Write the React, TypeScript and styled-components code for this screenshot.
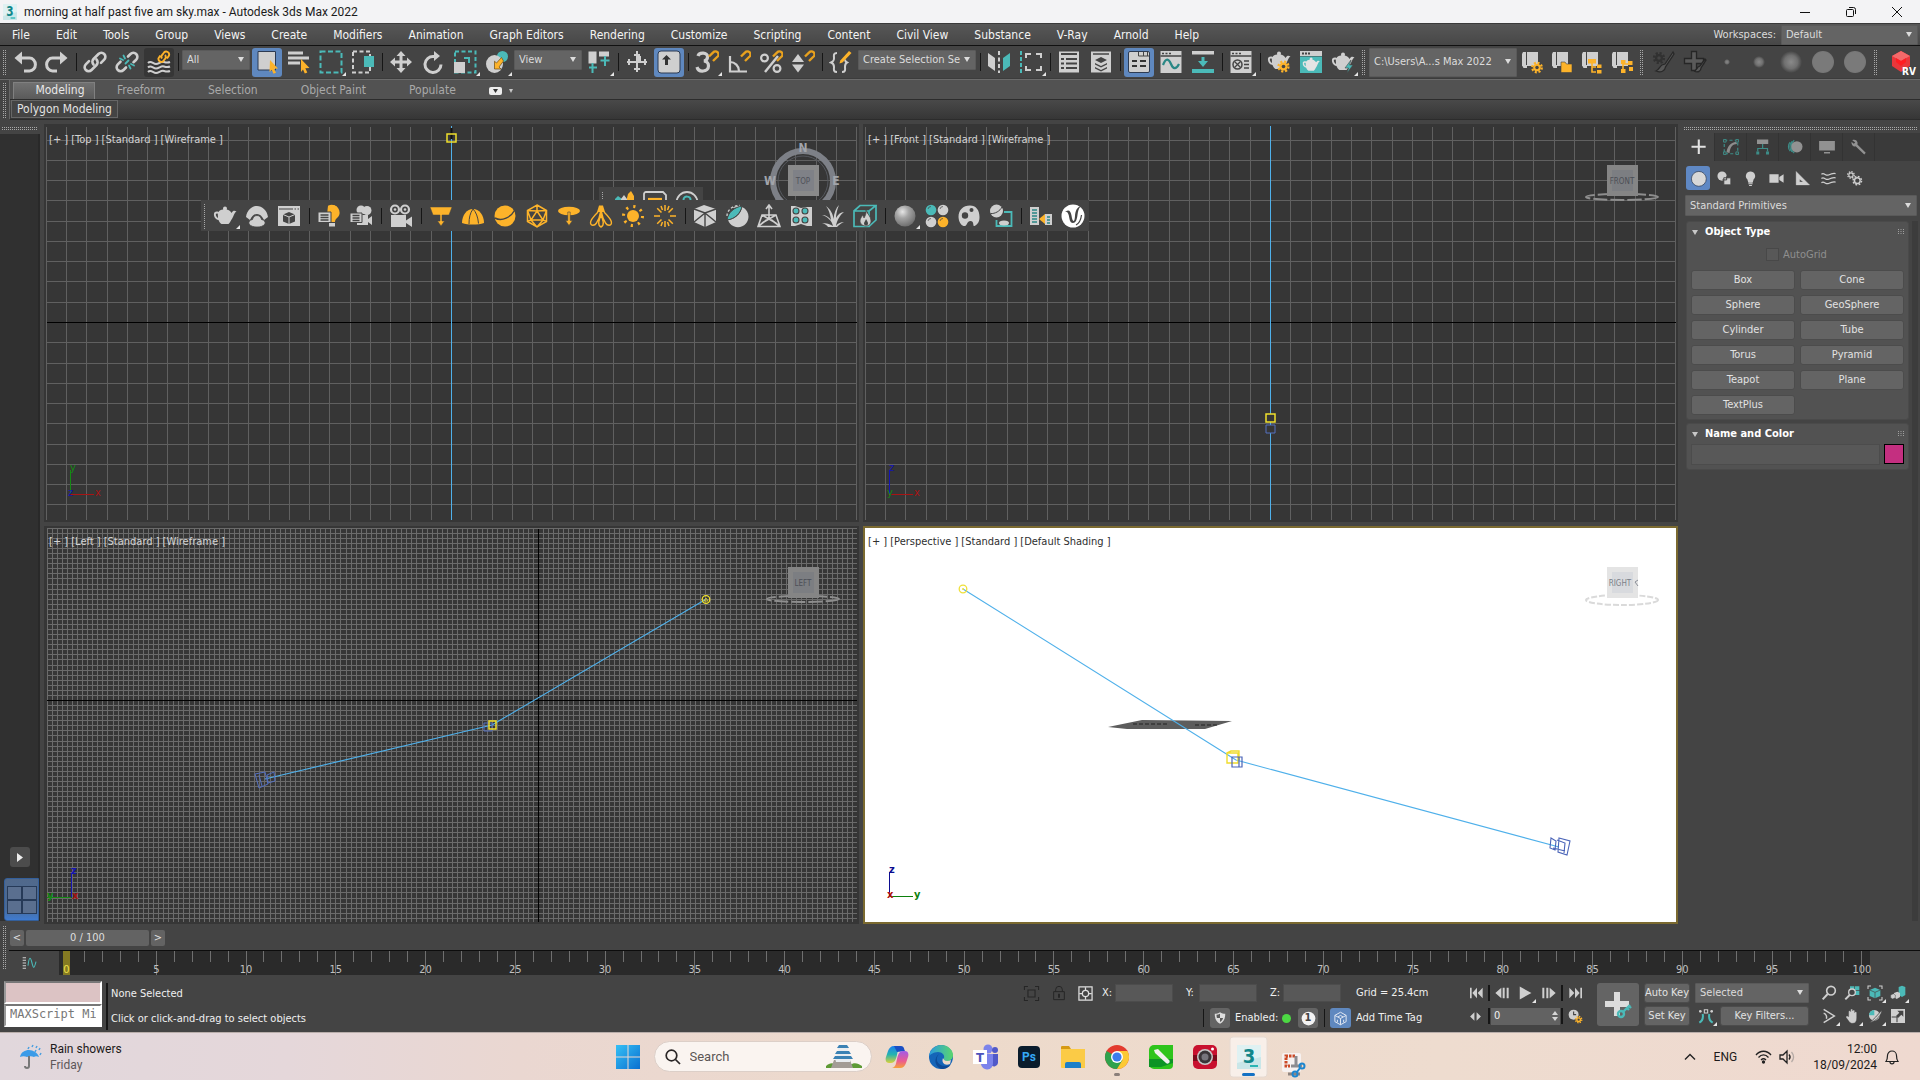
import React from 'react';
import styled, { createGlobalStyle, css } from 'styled-components';

const G = '#cfcfcf';
const T = '#4bbab8';
const Y = '#fdb32a';
const D = '#444444';

const uiFont = '"DejaVu Sans Condensed", "Noto Sans", sans-serif';
const osFont = 'Roboto, "Open Sans", sans-serif';

const GlobalStyle = createGlobalStyle`
  *, *::before, *::after { box-sizing: border-box; }
  body { margin: 0; background: #444; }
  button, input, select { font: inherit; color: inherit; margin: 0; }
  button { border: 0; padding: 0; background: none; }
  svg { display: block; }
`;

/* ---------- icons (24 x 24 canvas) ---------- */

const gear = (cx: number, cy: number, r: number, c: string, hole = D) => (
  <g>
    <circle cx={cx} cy={cy} r={r + 1} fill="none" stroke={c} strokeWidth="2.2" strokeDasharray={`${(r + 1) * 0.42} ${(r + 1) * 0.365}`} />
    <circle cx={cx} cy={cy} r={r} fill={c} />
    <circle cx={cx} cy={cy} r={r * 0.45} fill={hole} />
  </g>
);
const magnet = (
  <path d="M13 7.5l4.2-4.2a3 3 0 0 1 4.4 4.2L17 12" transform="translate(1 -1)" fill="none" stroke="#e8a11e" strokeWidth="2.4" />
);
const scroll = (
  <path d="M3 2h3v13H3.5A2 2 0 0 0 2 16.500V4zM7 2h11v14H7z M2 15h5v3H3.500z" fill={G} />
);
const teapot = (c: string) => (
  <path d="M10 4.500a2 2 0 0 1 4 0l-.3 1c2.300.4 4 1.600 4.800 3.500 1.500-2.500 3-2.600 5-1.500-2.500 1-3 6-5.300 8.500-.6 1.500-1.700 3-2.700 4h-7c-1.500-1-2.500-2.500-3-4C2.500 15.500.5 12.500 1 9.500c.3-1.700 2.500-2.500 4.500-1.500.8-1.400 2.300-2.300 4.700-2.500zM4.800 9.800c-1.600-.6-2.300.3-1.800 1.800.4 1.200 1 2 2 2.400z" fill={c} fillRule="evenodd" />
);

const icons: Record<string, React.ReactNode> = {
  undo: <g><path d="M1.500 8L9 1.500v13z" fill={G} /><path d="M7 8h9.500a5 5.500 0 0 1 0 13H11" fill="none" stroke={G} strokeWidth="3" /></g>,
  redo: <g><path d="M22.500 8L15 1.500v13z" fill={G} /><path d="M17 8H7.500a5 5.500 0 0 0 0 13H12" fill="none" stroke={G} strokeWidth="3" /></g>,
  link: (
    <g fill="none" stroke={G} strokeWidth="2.6" strokeLinecap="round">
      <path d="M10.500 14.500a4 4 0 0 1 0-5.500l5-5a4 4 0 0 1 5.700 5.700l-3.200 3.200" />
      <path d="M13.500 9.500a4 4 0 0 1 0 5.500l-5 5a4 4 0 0 1-5.700-5.700l3.200-3.200" />
    </g>
  ),
  unlink: (
    <g fill="none" strokeWidth="2.6" strokeLinecap="round">
      <path d="M13 6.500l2.500-2.500a4 4 0 0 1 5.700 5.700L18.500 12.200M11 17.500L8.500 20a4 4 0 0 1-5.700-5.700L5.500 11.700" stroke={G} />
      <path d="M8.500 5.500l1.500 3M5 8.500l3 1.500M15.500 18.500l-1.500-3M19 15.500l-3-1.500M10.500 13.500l3-3" stroke={T} strokeWidth="1.800" />
    </g>
  ),
  bind: (
    <g fill="none">
      <path d="M1 13c3-3 5 1 8 1s5-3 8-2 4 1 6 0M1 17.500c3-3 5 1 8 1s5-3 8-2 4 1 6 0M1 22c3-3 5 1 8 1s5-3 8-2 4 1 6 0" stroke={G} strokeWidth="2" />
      <path d="M15 8.500a3 3 0 0 1 .5-4l1.500-2a3 3 0 0 1 5 3l-2 3M18 5a3 3 0 0 1-.5 4.500l-1.500 2a3 3 0 0 1-4.500-3.200l1.800-2.800" stroke={Y} strokeWidth="1.900" />
    </g>
  ),
  select: (
    <g>
      <path d="M3 1.500h17.500v18.500H3z" fill={G} stroke="#2d3b52" strokeWidth="1" />
      <path d="M15 10l8 8.500-4 .3 2 4-2.500 1-1.800-4L14.500 22z" fill={Y} />
    </g>
  ),
  selectName: (
    <g>
      <path d="M1 1.500h15v3H1zM1 6.500h21v3H1zM1 11.500h12v3H1z" fill={G} />
      <path d="M14 9l8.500 9-4.200.3 2 4.200-2.500 1-1.800-4L14 22z" fill={Y} />
    </g>
  ),
  rectRegion: <rect x="1.500" y="1.500" width="21" height="21" fill="none" stroke={T} strokeWidth="2" strokeDasharray="5 2.500" />,
  windowCross: (
    <g>
      <rect x="2" y="1.500" width="17" height="21" fill="none" stroke={G} strokeWidth="2" strokeDasharray="4 2.500" />
      <rect x="13" y="6" width="10" height="11" fill={T} />
    </g>
  ),
  move: <path d="M12 1l4.500 5h-3v4.500H18v-3l5 4.500-5 4.500v-3h-4.500V18h3L12 23l-4.500-5h3v-4.500H6v3L1 12l5-4.500v3h4.500V6h-3z" fill={G} />,
  rotate: <path d="M13 1l6 5-6 5V8a6.500 6.500 0 1 0 5.500 6.500h3A9.500 9.500 0 1 1 13 5z" fill={G} />,
  scale: (
    <g>
      <rect x="2" y="1.500" width="20.500" height="21" fill="none" stroke={T} strokeWidth="2" strokeDasharray="4 2.500" />
      <path d="M1 12h11v11H1z" fill={G} />
      <path d="M11 7h6v6h-2V9h-4z" fill={T} />
    </g>
  ),
  place: (
    <g>
      <circle cx="17.500" cy="6.500" r="5.500" fill={T} />
      <ellipse cx="9.500" cy="14" rx="8.500" ry="9" fill={G} />
      <path d="M16.500 7.500l-5 5.500-2-1.800V19h6.500l-2-2 4.500-6z" fill={Y} stroke="#6b4a10" strokeWidth=".7" />
    </g>
  ),
  pivot: (
    <g>
      <path d="M1.500 1.500h8v12h-8zM12 1.500h10v5h-10z" fill={G} />
      <path d="M4.500 13h2v3.500H10v2H6.500V23h-2v-4.500H2v-2h2.500zM17 6h2v3.500h3.500v2H19V16h-2v-4.500h-3.500v-2H17z" fill={T} />
    </g>
  ),
  manipulate: <path d="M11 1h2v5h3v5h6v2h-6v0h-3v9h-2v-9H2v-2h9zM9 4h6v2H9zM9 18h6v2H9zM3 9h2v6H3zM19 9h2v6h-2z" fill={G} />,
  keyboard: (
    <g>
      <rect x="1" y="1" width="22" height="22" rx="3" fill={G} stroke="#2d3b52" strokeWidth="1" />
      <path d="M9.500 5l4.500 4.500h-3V15H8V9.500H5z" fill="#333" />
    </g>
  ),
  snap3: (
    <g>
      <path d="M3 6c1-4 10-4 9.500 1 0 2-1 3.500-3.500 4 3 .5 4.500 2 4.500 5 0 6-10 7-11.500 1" fill="none" stroke={G} strokeWidth="3.200" />
      {magnet}
    </g>
  ),
  snapAngle: (
    <g>
      <path d="M3 6v15.500h17M3 12c5 0 9 4 9 9" fill="none" stroke={G} strokeWidth="2.200" />
      {magnet}
    </g>
  ),
  snapPercent: (
    <g>
      <path d="M19 6L6 22" stroke={G} strokeWidth="2.400" />
      <circle cx="5.500" cy="8" r="3.400" fill="none" stroke={G} strokeWidth="2.200" />
      <circle cx="18" cy="18.500" r="3.400" fill="none" stroke={G} strokeWidth="2.200" />
      {magnet}
    </g>
  ),
  snapSpinner: (
    <g>
      <path d="M1 12l6-8 6 8zM1 14.500h12l-6 8z" fill={G} />
      {magnet}
    </g>
  ),
  namedSel: (
    <g>
      <path d="M8 3c-4 0-3 3-3 5s0 3-3 4.500c3 1 3 2.500 3 4.500s-1 5 3 5M13 22c4 0 3-3 3-5s0-3.500 2-4.500c-1.500-.8-2-2-2-3" fill="none" stroke={G} strokeWidth="2" />
      <path d="M20 1l2.500 2-9 9.500-3 1 .8-3z" fill={Y} />
    </g>
  ),
  mirror: (
    <g>
      <path d="M1 3l7 5v13l-7-5z" fill={G} />
      <path d="M12 1v22" stroke={G} strokeWidth="2" strokeDasharray="4 2.500" />
      <path d="M23 3l-7 5v13l7-5z" fill={T} />
    </g>
  ),
  align: (
    <g fill="none" strokeWidth="2">
      <path d="M2 1v22" stroke={T} strokeDasharray="4 2" />
      <path d="M7 8V4h5M17 4h5v4M22 16v4h-5M12 20H7v-4" stroke={G} />
    </g>
  ),
  layers: (
    <g>
      <path d="M2 1.500h20v21H2z" fill={G} />
      <path d="M4 4h16M4 9h3M9 9h11M4 13.500h3M9 13.500h11M4 18h3M9 18h11" stroke={D} strokeWidth="2" />
    </g>
  ),
  stack: (
    <g>
      <path d="M2 1.500h20v21H2z" fill={G} />
      <path d="M4 4h16" stroke={D} strokeWidth="1.500" />
      <path d="M12 7l6 3-6 3-6-3zM6 13l6 3 6-3v1.500l-6 3-6-3zM6 17l6 3 6-3v1.500L12 21.500l-6-3z" fill={D} />
    </g>
  ),
  ribbon: (
    <g>
      <rect x="1.500" y="1.500" width="21" height="21" rx="1.500" fill={G} stroke="#2d3b52" />
      <path d="M11.500 2v4h10.500M16.500 2v4M20.500 2v4" stroke={D} fill="none" />
      <path d="M5 11h5M13 11h6M5 16h5M13 16h6" stroke="#333" strokeWidth="2.200" />
    </g>
  ),
  curve: (
    <g>
      <path d="M1.500 1h21v22h-21z" fill={G} />
      <path d="M3 3.500h2M6.500 3.500h2M10 3.500h2M1.500 6h21" stroke={D} strokeWidth="1.600" />
      <path d="M4 15c3-8 6-6 8-1s5 6 8 0" fill="none" stroke="#2a8785" strokeWidth="2.200" />
    </g>
  ),
  schematic: (
    <g>
      <path d="M1 1h22v3.500H1z" fill={G} />
      <path d="M10.500 7h3v4H17l-5 6-5-6h3.500zM1 19h22v4H1z" fill={T} />
    </g>
  ),
  material: (
    <g>
      <path d="M1.500 1h21v22h-21z" fill={G} />
      <path d="M3 3.500h2M6.500 3.500h2M10 3.500h2M1.500 6h21M15 11h5M15 14.500h5M15 18h5" stroke={D} strokeWidth="1.500" />
      <circle cx="8.500" cy="14.500" r="4.500" fill="none" stroke={D} strokeWidth="1.500" />
      <path d="M5.500 11.500l6 6M11.500 11.500l-6 6" stroke={D} strokeWidth="1.300" />
    </g>
  ),
  renderSetup: <g><g transform="translate(0 -1)">{teapot(G)}</g>{gear(16.500, 16.500, 4, Y)}</g>,
  renderFrame: (
    <g>
      <path d="M1 1h22v5H1z" fill={G} />
      <path d="M3 3.500h2M6 3.500h2M9 3.500h2" stroke={D} strokeWidth="2" />
      <path d="M1 6.500h22V23H1z" fill={T} />
      <g transform="translate(3 5.500) scale(.76)">{teapot('#e4e4e4')}</g>
    </g>
  ),
  render: <g>{teapot(G)}<path d="M20 10l-6 8h3.500l-1.500 5 6-8h-3.500z" fill={T} stroke={D} strokeWidth=".6" /></g>,
  projGear: <g>{scroll}{gear(17, 17.500, 3.800, Y)}</g>,
  projFolder: <g>{scroll}<path d="M11 12h4l1.500 2H22v8.500H11z" fill={Y} stroke={D} strokeWidth=".6" /></g>,
  projTree: <g>{scroll}<path d="M8 9h8v4.500H8z" fill={Y} /><path d="M12 13v9h4M12 17h4" stroke={Y} strokeWidth="1.600" fill="none" /><path d="M17 14.500h4.500v3.500H17zM17 20h4.500v3.500H17z" fill={Y} /></g>,
  projNodes: <g>{scroll}<path d="M13 12v9M13 14h7" stroke={Y} strokeWidth="1.600" /><path d="M11 10h4.500v4H11zM18 11h4.500v4H18zM11 19h4.500v4H11z" fill={Y} /><path d="M19 17h4v4h-4z" fill={Y} /></g>,
  brushGear: (
    <g opacity=".9">
      {gear(8, 8, 4, '#2f2f2f')}
      <path d="M22 2l-8 12-3 1c-2 1-3 5-6 6 5 2 9 0 9.500-4L23 4z" fill="#5a5a5a" stroke="#262626" strokeWidth="1.300" />
    </g>
  ),
  brushPlus: (
    <g>
      <path d="M8.500 1.500h5v7h7v5h-7v7h-5v-7h-7v-5h7z" fill="#5a5a5a" stroke="#262626" strokeWidth="1.300" />
      <path d="M22 9l-5 7-2 1c-1 1-2 4-4 4 4 2 7 0 7-3l5-8z" fill="#5a5a5a" stroke="#262626" strokeWidth="1.300" />
    </g>
  ),
  rv: (
    <g>
      <path d="M12 1l9 5v10l-9 6-9-6V6z" fill="#e8373b" />
      <path d="M12 1l9 5-9 5-9-5z" fill="#f4696a" />
      <path d="M7 8l5 3 5-3v4l-5 4-5-4z" fill="#ff1c22" />
    </g>
  ),
  /* floating V-Ray toolbar */
  teapot: teapot(G),
  cloud: (
    <g fill={G}>
      <path d="M1 13C2 6 7 2 12 2s10 4 11 11l-4 3c-2-4-4-6-7-6s-5 2-7 6z" />
      <path d="M12 11.500c3 0 4 2 4.500 4 3 .5 4 2 3.500 4.500-2 2.500-5 3-8 3s-6-.5-8-3c-.5-2.500.5-4 3.500-4.500.5-2 1.500-4 4.500-4z" stroke={D} strokeWidth=".8" />
    </g>
  ),
  vfb: (
    <g>
      <path d="M1 2h22v20H1z" fill={G} />
      <path d="M2 5h14M17.500 5h1.500M20.500 5H22" stroke={D} strokeWidth="1.200" />
      <path d="M12 8l6 2.500v7L12 20l-6-2.500v-7z" fill={D} />
      <path d="M6 10.500l6 2.500 6-2.500M12 13v7" stroke={G} fill="none" />
    </g>
  ),
  lightLister: (
    <g>
      <path d="M15.500 1a7.500 7.500 0 0 1 4 13.500c-1 .8-1.500 2-1.500 3.500h-5V5z" fill={Y} />
      <path d="M11 1.800a8 8 0 0 1 9 1.200v8H10z" fill={Y} />
      <path d="M12 19h6v3.500h-6z" fill={G} />
      <path d="M1 8h13v10.500H1z" fill={G} stroke={D} /><path d="M3.500 11h8M3.500 13.500h8M3.500 16h8" stroke={D} strokeWidth="1.300" />
    </g>
  ),
  camLister: (
    <g fill={G}>
      <circle cx="12" cy="6" r="4.500" /><circle cx="18" cy="6.500" r="4.500" />
      <path d="M8 11h11v10H8zM19 15l4-3v9l-4-3z" />
      <path d="M1 9h12v9.500H1z" stroke={D} /><path d="M3.500 11.500h7M3.500 14h7M3.500 16.500h7" stroke={D} strokeWidth="1.300" />
    </g>
  ),
  camera: (
    <g>
      <g fill="none" stroke={G} strokeWidth="2.200"><circle cx="6" cy="5.500" r="4" /><circle cx="16" cy="5.500" r="4" /></g>
      <circle cx="6" cy="5.500" r="1.300" fill={G} /><circle cx="16" cy="5.500" r="1.300" fill={G} />
      <path d="M2 11h15v12H2zM17 16.500l6-4V23l-6-4z" fill={G} />
    </g>
  ),
  planeLight: <path d="M1 3h22l-3 8h-7v6h2.500L12 22l-3.500-5H11v-6H4z" fill={Y} stroke={D} strokeWidth=".5" />,
  dome: <g><path d="M1 19C1 11 6 5 12 5s11 6 11 14c-6 2-16 2-22 0z" fill={Y} /><path d="M12 5c-3 4-4 9-4 15M12 5c3 3 5 8 5.500 14.500" stroke={D} strokeWidth="1" fill="none" /></g>,
  sphereLight: <g><circle cx="12" cy="12" r="10.500" fill={Y} /><path d="M2 14C9 18 18 13 21.500 6.500" stroke={D} strokeWidth="1.500" fill="none" /></g>,
  meshLight: <path d="M12 1l9.500 5.500v11L12 23l-9.500-5.500v-11zM12 7l6 9H6zM12 1v6M2.500 6.500L12 7l9.500-.5M2.500 6.500L6 16l-3.500 1.500M21.500 6.500L18 16l3.500 1.500M6 16l6 7 6-7" fill="none" stroke={Y} strokeWidth="1.500" />,
  discLight: <g><ellipse cx="12" cy="7" rx="11" ry="4.200" fill={Y} /><path d="M10.800 8h2.400v8.500h2.300L12 21.500l-3.500-5h2.300z" fill={Y} stroke={D} strokeWidth=".6" /></g>,
  ies: <g><path d="M8 8l2-6.500h4L16 8z" fill={Y} /><path d="M9 8c-3 3-8 8-7.500 11s4 3 6 0S11 11 11.500 8M15 8c3 3 8 8 7.500 11s-4 3-6 0S13 11 12.500 8M12 11c-2 5-4 10 0 12 4-2 2-7 0-12z" fill="none" stroke={Y} strokeWidth="1.400" /></g>,
  sun: <g><circle cx="12" cy="12" r="6" fill={Y} /><circle cx="12" cy="12" r="9.500" fill="none" stroke={Y} strokeWidth="3" strokeDasharray="2.200 5.260" /></g>,
  ambient: <path d="M12 1v6M12 17v6M1 12h6M17 12h6M4.200 4.200l4.300 4.300M15.500 15.500l4.300 4.300M4.200 19.800l4.300-4.300M15.500 8.500l4.300-4.300M8 2l1.500 4M16 2l-1.500 4M8 22l1.500-4M16 22l-1.500-4" stroke={Y} strokeWidth="1.500" />,
  proxy: <g><path d="M1 5l10-4 12 4v13l-11 5L1 18z" fill={G} /><path d="M1 5l11 4 11-4M12 9v14M12 9L1 18M12 9l11 9" stroke={D} strokeWidth="1.400" fill="none" /></g>,
  clipper: <g><path d="M7 4a10.500 10.500 0 1 1-4 12C8 16 16 11 17 3" fill={G} /><path d="M17 2C10 3 3 8 2 16c8-1 14-7 15-14z" fill={T} stroke={D} /><path d="M2 12C2 6 8 1 15 1.500" stroke={G} strokeWidth="1.300" strokeDasharray="2.500 2" fill="none" /></g>,
  planeObj: <g fill="none" stroke={G} strokeWidth="1.600"><path d="M12 14V3M9 5l3-4 3 4M5 11h14l4 11.500H1zM5 11l14 8M19 11L5 19M1.500 22l8-6M22.500 22l-8-6" /></g>,
  instancer: <g><path d="M2 2h4l6 2 6-1h5v19h-5l-6-2-6 2H2z" fill={G} /><g fill={T} stroke={D} strokeWidth="1.100"><circle cx="7" cy="7" r="3" /><circle cx="16" cy="7" r="3" /><circle cx="7" cy="16" r="3" /><circle cx="16" cy="16" r="3" /></g></g>,
  fur: <path d="M12 22c-1-5-5-9-11-11 4 0 7 2 9 5C9 10 8 6 5 2c5 4 7 8 7.500 13C13 9 15 4 18 1c-2 5-3 9-3 13 2-4 5-6 8-6-4 3-7 8-8 14 2-3 5-4 8-4-3 1-5 3-7 5H7c-1-2-3-3-6-4 4 0 8 1 11 3z" fill={G} />,
  fire: <g><path d="M1 7h15v15.500H1zM1 7l6-5.500h16L16 7M23 1.500V16l-7 6.500" fill="none" stroke={T} strokeWidth="1.700" /><path d="M13 6c1 4 5 6 5 11 0 3-2 5-5 5s-6-2-6-5c0-3 2-4 2.500-6 1 1 1 2 1.500 3 1-2 2.500-4 2-8z" fill={G} stroke={D} strokeWidth=".7" /><path d="M13 15c1 2 2 3 2 4.500a2 2 0 0 1-4 0c0-1.500 1.500-2.500 2-4.500z" fill={D} /></g>,
  ball: <g><defs><radialGradient id="ball" cx=".38" cy=".3" r=".75"><stop offset="0" stopColor="#e6e6e6" /><stop offset=".4" stopColor="#a5a5a5" /><stop offset="1" stopColor="#6a6a6a" /></radialGradient></defs><circle cx="12" cy="12" r="10.500" fill="url(#ball)" /></g>,
  balls: <g><circle cx="6" cy="6" r="5.300" fill={T} /><circle cx="18" cy="6" r="5.300" fill={G} /><circle cx="6" cy="18" r="5.300" fill={G} /><circle cx="18" cy="18" r="5.300" fill={Y} /><g fill="none" stroke={D} strokeWidth=".7"><path d="M3 5a3 3 0 0 1 3-2.500M15 5a3 3 0 0 1 3-2.500M3 17a3 3 0 0 1 3-2.500M15 17a3 3 0 0 1 3-2.500" /></g></g>,
  palette: <g><path d="M13 1.500C6 1.500 1.500 6 1.500 13c.3 5 2.500 8 5 9 4 1 3-5 7-5s2 6 4 5c4-2 5-5 5-9C22.500 6 19 1.500 13 1.500z" fill={G} /><circle cx="14.500" cy="6" r="2" fill={D} /><circle cx="8" cy="11.500" r="3.200" fill={D} /></g>,
  converter: <g><circle cx="7.500" cy="7" r="6.500" fill={G} /><path d="M1.500 9.500C6 10 11 7 13 3" stroke={D} fill="none" /><path d="M15 8h7.500v14H7.500v-6" fill="none" stroke={T} strokeWidth="1.800" /><ellipse cx="15" cy="19" rx="5" ry="2.500" fill={G} /></g>,
  sceneConv: <g><path d="M1 3h9v18H1zM16 10h7v11h-7z" fill={G} /><path d="M3 6h5M3 9h5M3 12h5M3 15h5M3 18h5M18 13h3M18 16h3M18 19h3" stroke="#2a8785" strokeWidth="1.400" /><path d="M16 10v10l-6-5z" fill={Y} /></g>,
  vray: <g><circle cx="12" cy="12" r="11.500" fill="#fff" /><path d="M4 7.500l3-1c2 0 3 2 3.500 5s1.200 5.500 2 5.500 1.300-2 1.500-5c.3-5 2-9 5.500-9.500-2 2-2.500 5-3 8.500-.6 5-2 8-4.500 8-3.500 0-3.500-5-4.300-8C7 8.500 6 7.500 4 7.500z" fill={D} /><path d="M15 21c4-2 5-6 5.500-10" stroke={D} strokeWidth="1.200" fill="none" /></g>,
  trees: <g><path d="M4 8l3-3 4 3v12H4z" fill={T} /><path d="M10 8l3-4 3 4v12h-6z" fill={G} /><path d="M17 3l3-3 3 5v15h-7V7z" fill={Y} /></g>,
  frame: <g fill="none"><path d="M1 22V3a2 2 0 0 1 2-2h17l3 3v16" stroke={G} strokeWidth="1.800" /><path d="M5 8h14" stroke={Y} strokeWidth="2.200" /></g>,
  help: <g fill="none"><circle cx="12" cy="11.500" r="10.500" stroke={G} strokeWidth="1.800" /><path d="M8.500 9c0-5 7.500-4 7 0 0 2-3 2.500-3.500 5" stroke={T} strokeWidth="2" /></g>,
  /* command panel */
  create: <path d="M10.500 3h2.500v7.500H20V13h-7v7.500h-2.500V13H3v-2.500h7.500z" fill="#e2e2e2" />,
  modify: <g fill="none"><path d="M3 3h18v18H3z" stroke="#3d8c87" strokeWidth="1.600" strokeDasharray="4 3" /><path d="M6 19C7 12 11 6 19 5l1 3c-6 0-9 4-10 12z" fill="#8d8d8d" /><g fill={D} stroke="#3d8c87" strokeWidth="1.200"><path d="M2 2h3.500v3.500H2zM18.500 2H22v3.500h-3.500zM2 18.500h3.500V22H2zM18.500 18.500H22V22h-3.500z" /></g></g>,
  hierarchy: <g><path d="M4 2h15v6H4z" fill="#929292" /><path d="M11.500 8v6M5 18v-4h13v4" stroke="#3d8c87" strokeWidth="1.600" fill="none" /><path d="M3 18h4v4H3zM16 18h4v4h-4z" fill="#3d8c87" /></g>,
  motion: <g><g fill="none" stroke="#3d8c87" strokeWidth="1.500"><path d="M8 4.500a10 10 0 0 0 0 14M11 3a11 11 0 0 0 0 17" /><path d="M5.500 5.500a9 9 0 0 0 0 12" /></g><circle cx="14.500" cy="11.700" r="7.500" fill="#929292" /></g>,
  display: <g fill="#929292"><path d="M1.500 4h21v12.500h-21zM8 18.500h8v2H8z" /></g>,
  utilities: <path d="M3 3c2-1 6-1 7 3 .3 1 0 2-.2 2.500L21 19.500 19 22 7.500 11C5 12 1.500 10 2 5l3 2.500L7 6z" fill="#929292" />,
  geometry: <circle cx="12.500" cy="12.500" r="10.500" fill="#d8d8d8" stroke="#2d3b52" strokeWidth="1" />,
  shapes: <g><circle cx="8.500" cy="8.500" r="6.500" fill={G} /><path d="M11 11h10v10H11z" fill={G} stroke={D} strokeWidth="1.400" /><path d="M9 14h6V9" fill="none" stroke={D} strokeWidth="1.400" /></g>,
  lights: <g><path d="M12 2a6.500 6.500 0 0 1 4.500 11.200L15 18H9l-1.500-4.800A6.500 6.500 0 0 1 12 2z" fill={G} /><path d="M9 19.500h6M10 21.800h4" stroke={G} strokeWidth="1.500" /></g>,
  cameras: <path d="M2 6h13v12H2zM16 10l6-4v12l-6-4z" fill={G} />,
  helpers: <path d="M3 2l19 19H3zM8 13v4h5z" fill={G} fillRule="evenodd" stroke={G} strokeWidth=".5" />,
  warps: <path d="M2 6c4-3 6 3 10 1s6-3 10-2M2 12c4-3 6 3 10 1s6-3 10-2M2 18c4-3 6 3 10 1s6-3 10-2" fill="none" stroke={G} strokeWidth="1.700" />,
  systems: <g fill="none" stroke={G}><circle cx="7" cy="7" r="3" strokeWidth="1.600" /><circle cx="7" cy="7" r="4.600" strokeWidth="1.800" strokeDasharray="2 1.600" /><circle cx="16" cy="15" r="4" strokeWidth="2" /><circle cx="16" cy="15" r="6" strokeWidth="2" strokeDasharray="2.600 2.100" /></g>,
  /* status bar */
  isolate: <g fill="none" stroke="#262626" strokeWidth="1.500"><path d="M2 7V2h5M17 2h5v5M22 17v5h-5M7 22H2v-5M7 7h10v10H7z" /></g>,
  lock: <g fill="none" stroke="#262626" strokeWidth="1.500"><path d="M4 10h16v12H4zM7 10V7a5 5 0 0 1 10 0v3" /><path d="M12 13v6" strokeWidth="3" /></g>,
  absolute: <g fill="none" stroke="#dedede" strokeWidth="2"><path d="M1.500 1.500h21v21h-21z" /><circle cx="12" cy="12" r="5" /><path d="M12 2v5M12 17v5M2 12h5M17 12h5" /></g>,
  shield: <g><path d="M12 2c3 2 6 2.500 9 2.500C21 14 18 19 12 22 6 19 3 14 3 4.500 6 4.500 9 4 12 2z" fill="#dedede" /><path d="M12 12V4.500c-2 1.300-4 2-6 2 0 2 .2 4 .8 5.500zM12 12v7c3-2 4.500-4 5.200-7z" fill="#5c5c5c" /></g>,
  one: <circle cx="12" cy="12" r="11" fill="#f2f2f2" />,
  timeTag: <g fill="none" stroke="#dfe6f2" strokeWidth="1.600"><path d="M12 2l9 5v10l-9 5-9-5V7zM3 7l9 5 9-5M12 12v10M12 7l4 2.500M8 9.500L12 7M7 14v4M17 14v4" /></g>,
  toStart: <path d="M3 4h2.500v16H3zM13.500 4v16L6.500 12zM22 4v16l-7.500-8z" fill={G} />,
  prev: <path d="M11 4v16L2 12zM13 4h3v16h-3zM19 4h3v16h-3z" fill={G} />,
  play: <path d="M3 1l20 11L3 23z" fill={G} />,
  next: <path d="M13 4v16l9-8zM8 4h3v16H8zM2 4h3v16H2z" fill={G} />,
  toEnd: <path d="M18.500 4H21v16h-2.500zM10.500 4v16l7-8zM2 4v16l7.500-8z" fill={G} />,
  keyMode: <path d="M10 4v16L2 12zM14 4v16l8-8z" fill={G} />,
  timeCfg: <g><circle cx="9" cy="9" r="8" fill={G} /><path d="M9 4v5h4" stroke={D} strokeWidth="1.800" fill="none" />{gear(17, 17, 4, Y)}</g>,
  tangents: <g><path d="M2 22c5-3 6-8 5-13M22 22c-5-3-6-8-5-13" stroke={T} strokeWidth="3" fill="none" /><path d="M9.500 2.500h5v5h-5z" fill="none" stroke={G} strokeWidth="1.600" /><circle cx="3.500" cy="5" r="2" fill={G} /><circle cx="20.500" cy="5" r="2" fill={G} /></g>,
  zoom: <g fill="none" stroke={G}><circle cx="15" cy="8.500" r="6.500" strokeWidth="2.400" /><path d="M10 13.500L2.500 21.500" strokeWidth="3" /></g>,
  zoomAll: <g><path d="M9 2h6v6H9zM16 2h7v6h-7zM16 9h7v6h-7z" fill={T} /><circle cx="12" cy="11" r="5" fill={D} stroke={G} strokeWidth="2" /><path d="M8.500 15L2 21.500" stroke={G} strokeWidth="3" /></g>,
  extents: <g><path d="M12 4l8 3.500v9L12 20l-8-3.500v-9z" fill={T} /><path d="M4 7.500l8 3.500 8-3.500M12 11v9" stroke={D} fill="none" /><path d="M1.500 6V1.500H6M18 1.500h4.500V6M22.500 18v4.500H18M6 22.500H1.500V18" fill="none" stroke={G} strokeWidth="1.600" /></g>,
  extentsAll: <g><path d="M13 3l5-2 5 2v12l-5 3-5-3z" fill={T} /><path d="M6 12l5-2 4 2v6l-5 3-4-3z" fill={G} /><path d="M1 15l4-2 3 2v4l-4 2-3-2z" fill={G} stroke={D} strokeWidth=".7" /></g>,
  fov: <g fill="none" stroke={G} strokeWidth="2.200"><path d="M4 2l16 10L4 22M4 8c4 1 5 5 4 8" /></g>,
  pan: <path d="M7 13V5.500a1.500 1.500 0 0 1 3 0V3a1.500 1.500 0 0 1 3 0v1.500a1.500 1.500 0 0 1 3 0V7a1.500 1.500 0 0 1 3 0v8c0 5-2 8-6 8-5 0-6-4-10-9 0-2 2-2.500 4-1z" fill={G} stroke={D} strokeWidth=".5" />,
  orbit: <g><circle cx="11" cy="11" r="8" fill={G} /><path d="M11 3a8 8 0 0 0-8 8h8z" fill={T} /><path d="M22 3c1 6-8 17-18 19 6-5 12-11 18-19z" fill={G} stroke={D} strokeWidth="1.200" /></g>,
  maximize: <g><path d="M1.500 1.500h21v21h-21z" fill={G} /><path d="M11 4h9v9l-3-3-5 5-3-3 5-5z" fill={D} /><path d="M2.500 13.500h8v8" stroke={D} strokeWidth="1.600" fill="none" /></g>,
  trackIcon: <g fill="none"><path d="M1 4h5M1 8h5M1 12h5M1 16h5M1 20h5" stroke={G} strokeWidth="1.600" /><path d="M9 16c2-16 4-12 6-4s3 10 6-2" stroke={T} strokeWidth="1.600" /></g>,
};

const Icon = ({ name, size = 24 }: { name: string; size?: number }) => (
  <svg width={size} height={size} viewBox="0 0 24 24" aria-hidden="true">{icons[name]}</svg>
);

/* ---------- shared parts ---------- */

const Grip = styled.span<{ $h: number; $w?: number }>`
  flex: none;
  width: ${(p) => p.$w ?? 10}px;
  height: ${(p) => p.$h}px;
  padding: 0 3px;
  background:
    repeating-linear-gradient(#444 0 1px, transparent 1px 2px) content-box,
    repeating-linear-gradient(90deg, #a8a8a8 0 1px, #444 1px 2px) content-box;
`;
const HGrip = styled.span`
  display: block;
  height: 4px;
  background:
    repeating-linear-gradient(#444 0 1px, transparent 1px 2px),
    repeating-linear-gradient(90deg, #a8a8a8 0 1px, #444 1px 2px);
`;
const Divider = styled.span<{ $w?: number; $h?: number }>`
  flex: none;
  width: ${(p) => p.$w ?? 6}px;
  height: ${(p) => p.$h ?? 18}px;
  background: linear-gradient(#161616, #161616) center / 1px 100% no-repeat;
`;
const ToolBtn = styled.button<{ $on?: boolean; $dim?: boolean; $fly?: boolean; $w?: number }>`
  flex: none;
  position: relative;
  display: grid;
  place-items: center;
  width: ${(p) => (p.$w ?? 32) - 2}px;
  height: 29px;
  margin: 0 1px;
  border-radius: 3px;
  ${(p) => p.$on && css`background: #5f88bf;`}
  ${(p) => p.$dim && css`background: #363636;`}
  ${(p) => p.$fly && css`
    &::after {
      content: '';
      position: absolute;
      right: 0;
      bottom: 1px;
      border: 2px solid transparent;
      border-right-color: #e6e6e6;
      border-bottom-color: #e6e6e6;
    }
  `}
`;
type ToolDef = { i: string; l: string; on?: boolean; dim?: boolean; fly?: boolean; w?: number };
const Tools = ({ items }: { items: ToolDef[] }) => (
  <>
    {items.map((t) => (
      <ToolBtn key={t.i} aria-label={t.l} $on={t.on} $dim={t.dim} $fly={t.fly} $w={t.w}>
        <Icon name={t.i} />
      </ToolBtn>
    ))}
  </>
);

const SelectBox = styled.span<{ $w?: number; $h: number; $x?: number; $raised?: boolean }>`
  flex: none;
  position: relative;
  display: block;
  width: ${(p) => (p.$w ? `${p.$w}px` : '100%')};
  height: ${(p) => p.$h}px;
  margin: 0 ${(p) => p.$x ?? 0}px;
  ${(p) => p.$raised && css`align-self: flex-start; margin-top: 4px;`}
  &::after {
    content: '';
    position: absolute;
    right: 6px;
    top: calc(50% - 3px);
    border: 3px solid transparent;
    border-top: 5px solid #dcdcdc;
    border-bottom: 0;
    pointer-events: none;
  }
  select {
    appearance: none;
    display: block;
    width: 100%;
    height: 100%;
    padding: 0 14px 0 4px;
    border: 1px solid #5a5a5a;
    border-radius: 1px;
    background: #646464;
    color: #dcdcdc;
    overflow: hidden;
  }
`;
type SelectProps = { label: string; value: string; w?: number; h: number; x?: number; raised?: boolean };
const Select = ({ label, value, w, h, x, raised }: SelectProps) => (
  <SelectBox $w={w} $h={h} $x={x} $raised={raised}>
    <select aria-label={label} defaultValue={value}><option>{value}</option></select>
  </SelectBox>
);

/* ---------- frame ---------- */

const Shell = styled.div`
  display: flex;
  flex-direction: column;
  min-width: 1200px;
  min-height: 100vh;
  background: #444;
  color: #e2e2e2;
  font: 11px/14px ${uiFont};
`;
const TitleBar = styled.header`
  display: flex;
  align-items: center;
  height: 23px;
  padding-left: 3px;
  background: #f3f3f5;
  color: #1b1b1b;
  font: 12px/16px ${osFont};
  h1 { flex: 1; margin: 0 0 0 7px; font: inherit; }
  button { display: grid; place-items: center; width: 46px; height: 23px; }
`;
const MenuBar = styled.nav`
  display: flex;
  align-items: center;
  height: 23px;
  padding-left: 12px;
  gap: 26px;
  border-top: 1px solid #3a3a3a;
  border-bottom: 1px solid #111;
  background: linear-gradient(#575757, #474747);
  color: #f4f4f4;
  button { height: 21px; font-size: 12px; white-space: nowrap; }
`;
const Workspaces = styled.label`
  display: flex;
  align-items: center;
  gap: 5px;
  margin: 0 2px 0 auto;
  color: #dcdcdc;
`;
const MainBar = styled.div`
  display: flex;
  align-items: center;
  height: 33px;
  background: #444;
  border-bottom: 1px solid #3c3c3c;
`;
const Brush = styled.button<{ $r: number; $soft?: boolean }>`
  flex: none;
  display: grid;
  place-items: center;
  width: 32px;
  height: 30px;
  &::after {
    content: '';
    width: ${(p) => p.$r * 2}px;
    height: ${(p) => p.$r * 2}px;
    border-radius: 50%;
    background: ${(p) => (p.$soft ? 'radial-gradient(circle closest-side, #8a8a8a, #707070 60%, #444)' : 'radial-gradient(circle, #7a7a7a 60%, #6a6a6a)')};
  }
`;
const RvButton = styled.button`
  position: relative;
  width: 32px;
  height: 30px;
  margin-left: 4px;
  display: grid;
  place-items: center;
  span { position: absolute; right: 1px; bottom: 0; font: bold 10px/10px ${uiFont}; color: #fff; }
`;

const Ribbon = styled.div`
  display: flex;
  height: 40px;
  border-top: 1px solid #6b6b6b;
  align-items: center;
`;
const RibbonBody = styled.div`
  flex: 1;
  align-self: stretch;
  border-left: 1px solid #666;
`;
const RibbonTabs = styled.div`
  display: flex;
  align-items: stretch;
  height: 20px;
  padding: 2px 0 0 3px;
  background: #525252;
  border-bottom: 1px solid #2c2c2c;
  gap: 43px;
  font: 12px/14px ${uiFont};
`;
const RibbonTab = styled.button<{ $on?: boolean }>`
  padding-bottom: 2px;
  color: ${(p) => (p.$on ? '#e8e8e8' : '#a9a9a9')};
  white-space: nowrap;
  ${(p) => p.$on && css`
    width: 82px;
    margin-right: -21px;
    padding-left: 12px;
    border: 1px solid #808080;
    border-bottom: 0;
    background: linear-gradient(#717171, #5a5a5a);
  `}
`;
const RibbonMenu = styled.button`
  display: flex;
  align-items: center;
  gap: 7px;
  margin-left: -10px;
`;
const RibbonPanel = styled.div`
  height: 20px;
  padding: 0 0 0 1px;
  background: linear-gradient(#494949, #363636);
  border-bottom: 1px solid #2c2c2c;
  font: 12px/16px ${uiFont};
  button { height: 18px; padding: 0 5px; border: 1px solid #666; background: #444; }
`;

const Work = styled.main`
  position: relative;
  flex: 1;
  display: grid;
  grid-template-columns: 40px minmax(0, 1fr) 242px;
  min-height: 500px;
`;
const Dock = styled.aside`
  display: flex;
  flex-direction: column;
  padding: 7px 0 4px 2px;
  ${HGrip} { width: 36px; margin-bottom: 4px; }
`;
const DockBody = styled.div`
  flex: 1;
  display: flex;
  flex-direction: column;
  justify-content: flex-end;
  align-items: flex-start;
  gap: 11px;
  background: #303030;
  border-right: 2px solid #292929;
  margin-left: -2px;
`;
const DockArrow = styled.button`
  display: grid;
  place-items: center;
  width: 20px;
  height: 20px;
  margin-left: 10px;
  border-radius: 3px;
  background: #4c4c4c;
`;
const LayoutTab = styled.button`
  display: grid;
  place-items: center;
  width: 35px;
  height: 43px;
  margin-left: 4px;
  border-radius: 3px 0 0 3px;
  border: 1px solid #335f9b;
  background: linear-gradient(#51698b, #4a6a95 70%, #3f7bd0);
`;

const Views = styled.div`
  display: grid;
  grid-template: repeat(2, minmax(0, 1fr)) / repeat(2, minmax(0, 1fr));
  gap: 4px;
  padding: 5px 0 1px 4px;
`;
const View = styled.section<{ $light?: boolean }>`
  position: relative;
  overflow: hidden;
  background: ${(p) => (p.$light ? '#fff' : '#363636')};
  border: 2px solid ${(p) => (p.$light ? '#7b6a30' : '#363636')};
  color: ${(p) => (p.$light ? '#2e2e2e' : '#d4d4d4')};
  h2 {
    position: absolute;
    left: 3px;
    top: 7px;
    margin: 0;
    font: 11px/14px ${uiFont};
  }
  h2 span { margin-right: 3px; }
`;
const Scene = styled.svg`
  position: absolute;
  inset: 0;
  width: 100%;
  height: 100%;
`;
const Cube = styled.svg`
  position: absolute;
  right: 11px;
  top: 10px;
`;

const Command = styled.aside`
  display: flex;
  flex-direction: column;
  padding: 7px 2px 0 6px;
`;
const CmdTabs = styled.div`
  display: flex;
  height: 28px;
  margin: 3px -2px 0 0;
  background: #3a3a3a;
`;
const CmdTab = styled.button<{ $on?: boolean }>`
  display: grid;
  place-items: center;
  width: ${(p) => (p.$on ? 31 : 32)}px;
  border-right: 1px solid #333;
  background: ${(p) => (p.$on ? '#444' : 'none')};
`;
const CmdCats = styled.div`
  display: flex;
  gap: 2px;
  padding: 5px 2px;
`;
const CmdCat = styled.button<{ $on?: boolean }>`
  display: grid;
  place-items: center;
  width: 24px;
  height: 24px;
  border-radius: 3px;
  background: ${(p) => (p.$on ? '#5f88c4' : 'none')};
`;
const CategoryRow = styled.div`
  padding: 0 1px;
`;
const CmdBody = styled.div`
  flex: 1;
  display: flex;
  padding: 0 0 4px 2px;
  margin-top: 5px;
  gap: 3px;
`;
const Rollouts = styled.div`
  flex: 1;
  display: flex;
  flex-direction: column;
  gap: 3px;
`;
const ScrollTrack = styled.div`
  width: 6px;
  background: #3c3c3c;
`;
const Rollout = styled.section`
  padding: 0 4px 4px;
  border: 1px solid #4a4a4a;
  border-radius: 3px;
  background: #525252;
`;
const RolloutHead = styled.h3`
  display: flex;
  align-items: center;
  gap: 7px;
  height: 20px;
  margin: 0;
  padding-left: 1px;
  color: #fff;
  font: bold 11px/14px ${uiFont};
  span { flex: 1; }
`;
const AutoGrid = styled.label`
  display: flex;
  align-items: center;
  gap: 4px;
  height: 17px;
  margin: 4px 0 7px 75px;
  color: #8f8f8f;
  input { appearance: none; width: 13px; height: 13px; border: 1px solid #484848; background: #585858; }
`;
const Prims = styled.div`
  display: grid;
  grid-template-columns: 1fr 1fr;
  gap: 5px;
`;
const Flat = styled.button<{ $h?: number }>`
  height: ${(p) => p.$h ?? 20}px;
  border: 1px solid #4c4c4c;
  border-radius: 3px;
  background: #646464;
  color: #e2e2e2;
  white-space: nowrap;
`;
const NameRow = styled.div`
  display: flex;
  gap: 4px;
  input { flex: 1; min-width: 0; height: 21px; border: 1px solid #4c4c4c; background: #585858; }
  button { width: 20px; height: 20px; border: 1px solid #000; background: #c42f80; }
`;

const Float = styled.div<{ $x: number; $y: number }>`
  position: absolute;
  left: ${(p) => p.$x}px;
  top: ${(p) => p.$y}px;
  display: flex;
  align-items: center;
  height: 31px;
  background: #444;
`;

/* ---------- timeline ---------- */

const Timeline = styled.div`
  display: flex;
  height: 50px;
`;
const TimeBody = styled.div`
  flex: 1;
  display: flex;
  flex-direction: column;
`;
const SliderRow = styled.div`
  display: flex;
  align-items: center;
  gap: 2px;
  height: 25px;
  padding: 0 0 0 1px;
`;
const SliderBtn = styled.button<{ $w: number }>`
  width: ${(p) => p.$w}px;
  height: 16px;
  border-radius: 2px;
  background: #636363;
  color: #dedede;
  line-height: 16px;
`;
const TrackRow = styled.div`
  display: flex;
  height: 25px;
  border-top: 1px solid #0c0c0c;
`;
const TrackBtn = styled.button`
  display: grid;
  place-items: center;
  width: 50px;
  padding-right: 8px;
`;
const Track = styled.ol`
  flex: 1;
  display: flex;
  justify-content: space-between;
  margin: 0 50px 0 0;
  padding: 0 7px;
  list-style: none;
  background: #2a2a2a;
`;
const Tick = styled.li<{ $major?: boolean; $now?: boolean }>`
  position: relative;
  display: flex;
  justify-content: center;
  width: 1px;
  height: ${(p) => (p.$major ? 24 : 11)}px;
  background: #6f6f6f;
  span {
    flex: none;
    align-self: flex-end;
    color: ${(p) => (p.$now ? '#f0e04a' : '#c0c0c0')};
    line-height: 11px;
  }
  ${(p) => p.$now && css`
    background: none;
    span { width: 7px; height: 24px; padding-top: 13px; background: #857a22; text-align: center; }
  `}
`;

/* ---------- status bar ---------- */

const Status = styled.footer`
  display: flex;
  align-items: flex-start;
  height: 57px;
  padding: 8px 11px 0 4px;
  color: #f0f0f0;
`;
const Scripts = styled.div`
  width: 98px;
  margin-top: -2px;
  input {
    display: block;
    width: 100%;
    height: 23px;
    padding: 0 4px;
    border: 2px solid #fff;
    border-top-color: #777;
    border-left-color: #999;
    border-radius: 0;
    font: 12px/14px "DejaVu Sans Mono", monospace;
  }
  input:first-child { background: #dcc3c4; }
  input:last-child { background: #fff; color: #777; padding-bottom: 4px; }
`;
const Messages = styled.div`
  flex: 1;
  display: grid;
  gap: 3px;
  margin: 0 0 0 4px;
  padding-left: 3px;
  border-left: 2px solid #161616;
  p { margin: 0; line-height: 22px; white-space: nowrap; }
`;
const StatusStack = styled.div<{ $gap: number }>`
  display: grid;
  gap: ${(p) => p.$gap}px;
  justify-items: end;
`;
const StatusRow = styled.div`
  display: flex;
  align-items: center;
  height: 20px;
`;
const IconBtn = styled.button<{ $w: number; $bg?: string; $fly?: boolean }>`
  position: relative;
  display: grid;
  place-items: center;
  width: ${(p) => p.$w}px;
  height: 20px;
  border-radius: 3px;
  background: ${(p) => p.$bg ?? 'none'};
  ${(p) => p.$fly && css`
    &::after {
      content: '';
      position: absolute;
      right: 0;
      bottom: 0;
      border: 2px solid transparent;
      border-right-color: #e6e6e6;
      border-bottom-color: #e6e6e6;
    }
  `}
  b { position: absolute; inset: 0; color: #444; line-height: 20px; text-align: center; }
`;
const Coord = styled.label`
  display: flex;
  align-items: center;
  width: 84px;
  padding-left: 3px;
  span { width: 13px; }
  input { width: 58px; height: 18px; border: 1px solid #4c4c4c; background: #585858; }
`;
const StatusText = styled.span<{ $w: number }>`
  width: ${(p) => p.$w}px;
  padding-left: 5px;
  white-space: nowrap;
`;
const Dot = styled.i`
  width: 9px;
  height: 9px;
  margin: 0 7px 0 0;
  border-radius: 50%;
  background: #4cd843;
`;
const Playback = styled.div`
  display: grid;
  grid-template-columns: 25px 2px 71px 2px 25px;
  gap: 3px 0;
  align-items: center;
  margin: 0 9px 0 24px;
`;
const VLine = styled.span`
  height: 16px;
  background: #161616;
`;
const PlayGroup = styled.div`
  display: flex;
  justify-content: space-around;
`;
const Spinner = styled.label`
  display: flex;
  align-items: center;
  height: 17px;
  margin: 0 1px;
  padding-right: 2px;
  background: #626262;
  input { flex: 1; min-width: 0; border: 0; padding: 0 3px; background: none; }
`;
const KeyGrid = styled.div`
  display: grid;
  grid-template: 20px 20px / 42px 46px 114px;
  gap: 3px 5px;
  margin-right: 8px;
`;
const BigKey = styled.button`
  grid-row: span 2;
  display: grid;
  place-items: center;
  border-radius: 3px;
  background: #646464;
`;
const KeyRow = styled.div`
  display: flex;
  gap: 3px;
  ${Flat} { flex: 1; }
`;
const NavGrid = styled.div`
  display: grid;
  grid-template-columns: repeat(4, 23px);
  gap: 3px 0;
`;

/* ---------- taskbar ---------- */

const Taskbar = styled.footer`
  display: grid;
  grid-template-columns: 1fr auto 1fr;
  align-items: center;
  height: 48px;
  border-top: 1px solid #b9aeab;
  background: linear-gradient(90deg, #e1d7dc, #e5d7da 15%, #ead7d1 27%, #eddacb 50%, #eedccf 75%, #efd9d0);
  color: #1d1a1a;
  font: 12px/16px ${osFont};
`;
const Weather = styled.button`
  display: flex;
  align-items: center;
  gap: 7px;
  justify-self: start;
  padding-left: 19px;
  text-align: left;
  small { display: block; font-size: 12px; color: #5d5759; }
`;
const Apps = styled.div`
  display: flex;
  align-items: center;
`;
const AppBtn = styled.button`
  width: 44px;
  height: 44px;
  svg { margin: auto; }
`;
const Search = styled.label`
  display: flex;
  align-items: center;
  width: 218px;
  height: 31px;
  margin: 0 3px 0 4px;
  padding: 0 8px 0 10px;
  border: 1px solid #dccfc8;
  border-radius: 16px;
  background: #faf4f0;
  input { flex: 1; min-width: 0; border: 0; padding: 0 0 0 9px; background: none; font: 13px/18px ${osFont}; outline: 0; }
  input::placeholder { color: #5c5655; opacity: 1; }
`;
const Tray = styled.div`
  display: flex;
  align-items: center;
  justify-self: end;
  gap: 18px;
  padding-right: 21px;
`;
const Clock = styled.button`
  display: flex;
  align-items: center;
  gap: 8px;
  text-align: right;
`;

/* ---------- drawings ---------- */

const gridPath = (ox: number, oy: number, step: number) => {
  let d = '';
  for (let k = -200; k < 500; k++) {
    const x = Math.round(ox + k * step);
    if (k !== 0 && x >= 0 && x < 2400) d += `M${x} 0V1400`;
    const y = Math.round(oy + k * step);
    if (k !== 0 && y >= 0 && y < 1400) d += `M0 ${y}H2400`;
  }
  return d;
};
const Grid = ({ x, y, step, color }: { x: number; y: number; step: number; color: string }) => (
  <g fill="none" shapeRendering="crispEdges" transform="translate(.5 .5)">
    <path d={gridPath(x, y, step)} stroke={color} />
    <path d={`M${x} 0V1400M0 ${y}H2400`} stroke="#000" />
  </g>
);
type AxisProps = { x: number; y: number; up: [string, string]; side: [string, string]; dir?: number; origin: [string, string]; bold?: boolean };
const Axis = ({ x, y, up, side, dir = 1, origin, bold }: AxisProps) => (
  <g fontFamily={uiFont} fontSize="11" fontWeight={bold ? 'bold' : 'normal'} shapeRendering="crispEdges">
    <path d={`M${x + 0.5} ${y}v-24`} stroke={up[1]} />
    <path d={`M${x} ${y + 0.5}h${24 * dir}`} stroke={side[1]} />
    <text x={x} y={y - 23} fill={up[1]}>{up[0]}</text>
    <text x={dir > 0 ? x + 25 : x - 24} y={y + 2} fill={side[1]}>{side[0]}</text>
    <text x={x - (dir > 0 ? 2 : -1)} y={y + 2} fill={origin[1]}>{origin[0]}</text>
  </g>
);
const RED = '#a81414';
const GREEN = '#148a14';
const BLUE = '#1414b4';
const LINE = '#4fb0ea';

const SideCube = ({ label, light }: { label: string; light?: boolean }) => (
  <Cube width="84" height="70" viewBox="0 0 84 70">
    <ellipse cx="41" cy={light ? 62 : 61} rx="36" ry={light ? 5 : 3} fill="none" stroke={light ? '#dadada' : '#8e8e8e'} strokeWidth="2" strokeDasharray={light ? '6 2' : '14 3'} />
    <path d="M26 29h31v31H26z" fill={light ? '#e4e4e4' : '#858585'} />
    <path d="M31 34h21v21H31z" fill={light ? '#d8dade' : '#7c7e82'} />
    <text x={light ? 39 : 41} y="48" textAnchor="middle" fontFamily={uiFont} fontSize="8" fill={light ? '#7b7f88' : '#4c4f56'}>{label}</text>
    {light && <path d="M57 42l-3 2 3 4" stroke="#8b8f98" fill="none" />}
  </Cube>
);
const Compass = () => (
  <Cube width="84" height="84" viewBox="0 0 84 84">
    <circle cx="41" cy="45" r="30" fill="none" stroke="#7d8087" strokeWidth="6" />
    <circle cx="41" cy="45" r="25" fill="none" stroke="#55585e" strokeWidth="1" />
    <path d="M26 29h31v31H26z" fill="#8a8a8a" />
    <path d="M31 34h21v21H31z" fill="#7f8187" />
    <g fontFamily={uiFont} textAnchor="middle">
      <text x="41" y="48" fontSize="8" fill="#4f525a">TOP</text>
      <g fontSize="12" fontWeight="bold" fill="#a2a5ab"><text x="41" y="16">N</text><text x="8" y="49">W</text><text x="74" y="49">E</text></g>
    </g>
  </Cube>
);

const ViewLabel = ({ parts }: { parts: string[] }) => (
  <h2>{parts.map((p) => <span key={p}>[{p} ]</span>)}</h2>
);

const MENUS = ['File', 'Edit', 'Tools', 'Group', 'Views', 'Create', 'Modifiers', 'Animation', 'Graph Editors', 'Rendering', 'Customize', 'Scripting', 'Content', 'Civil View', 'Substance', 'V-Ray', 'Arnold', 'Help'];
const PRIMS = ['Box', 'Cone', 'Sphere', 'GeoSphere', 'Cylinder', 'Tube', 'Torus', 'Pyramid', 'Teapot', 'Plane', 'TextPlus'];

const MaxLogo = () => (
  <>
    <rect x="0" y="0" width="24" height="24" fill="#c9e6e8" />
    <path d="M0 0h24v12L0 18z" fill="#dff1f2" />
    <text x="12" y="18" textAnchor="middle" fontFamily={uiFont} fontWeight="bold" fontSize="20" fill="#12878a">3</text>
    <path d="M13 20h8v2h-8z" fill="#2bb5b4" />
  </>
);

const appIcons: [string, React.ReactNode][] = [
  ['Copilot', (
    <>
      <defs>
        <linearGradient id="cpa" x1="0" y1="0" x2="0" y2="1"><stop offset="0" stopColor="#1b7ff0" /><stop offset=".5" stopColor="#25b3b0" /><stop offset="1" stopColor="#d8d13a" /></linearGradient>
        <linearGradient id="cpb" x1="0" y1="0" x2="0" y2="1"><stop offset="0" stopColor="#a25be8" /><stop offset=".6" stopColor="#ec5c8f" /><stop offset="1" stopColor="#f6a13a" /></linearGradient>
      </defs>
      <path d="M19 11h8c-4 1-4 5-5 9s-2 8-6 8h-2c-3 0-4-3-3-6l2-6c1-3 3-5 6-5z" fill="url(#cpa)" />
      <path d="M19 11h7c3 0 3 3 4 5l-8 1z" fill="#1a4fc4" />
      <path d="M25 33h-8c4-1 4-5 5-9s2-8 6-8h2c3 0 4 3 3 6l-2 6c-1 3-3 5-6 5z" fill="url(#cpb)" />
    </>
  )],
  ['Edge', (
    <>
      <defs><linearGradient id="edg" x1="0" y1="0" x2="1" y2="0"><stop offset="0" stopColor="#2b9be0" /><stop offset="1" stopColor="#5ad66c" /></linearGradient></defs>
      <circle cx="22" cy="22" r="12" fill="#1565b8" />
      <path d="M10 21c1-6 6-11 12-11 7 0 12 5 12 10 0 4-3 6-6 6-2 0-4-1-3-3 1-3-2-6-6-6-5 0-8 3-9 4z" fill="url(#edg)" />
      <path d="M20 19c-5 5-1 12 6 12 3 0 5-1 6-2-2 4-6 5-9 5-7-1-9-11-3-15z" fill="#0d4a96" />
      <path d="M24 23c1 3 4 4 8 2l-1 4c-5 2-9-1-7-6z" fill="#eddacb" />
    </>
  )],
  ['Teams', (
    <>
      <circle cx="25" cy="14" r="4.500" fill="#7b83eb" /><circle cx="32" cy="15" r="3" fill="#5059c9" />
      <path d="M28 19h7v9a4 4 0 0 1-7 2z" fill="#5059c9" /><path d="M18 19h12v9a6 6 0 0 1-12 1z" fill="#7b83eb" />
      <path d="M10 15h14v14H10z" fill="#fff" /><text x="17" y="27" textAnchor="middle" fontFamily={uiFont} fontSize="13" fontWeight="bold" fill="#4b53bc">T</text>
    </>
  )],
  ['Photoshop', (
    <>
      <rect x="11" y="11" width="22" height="22" rx="4" fill="#0a1c2c" />
      <text x="22" y="26" textAnchor="middle" fontFamily={osFont} fontSize="12" fontWeight="bold" fill="#35a8f5">Ps</text>
    </>
  )],
  ['File Explorer', (
    <>
      <path d="M10 12c0-1 1-1 1-1h7l2 3H10z" fill="#d69a14" /><path d="M10 14h24v19H11a1 1 0 0 1-1-1z" fill="#fbcb46" />
      <path d="M14 33v-4a2 2 0 0 1 2-2h12a2 2 0 0 1 2 2v4z" fill="#1c7fc8" />
    </>
  )],
  ['Chrome', (
    <>
      <circle cx="22" cy="22" r="12" fill="#e33b2e" />
      <path d="M22 22L11.600 16A12 12 0 0 0 22 34l6-9z" fill="#2fa24c" /><path d="M22 34a12 12 0 0 0 10.400-18H22l5.500 9z" fill="#fcc934" />
      <circle cx="22" cy="22" r="6" fill="#fff" /><circle cx="22" cy="22" r="4.600" fill="#3b7ded" />
      <rect x="19" y="38" width="6" height="3" rx="1.500" fill="#8a7f7a" />
    </>
  )],
  ['CorelDRAW', (
    <>
      <path d="M10 15a5 5 0 0 1 5-5h19v20a4 4 0 0 1-4 4H15a5 5 0 0 1-5-5z" fill="#2ec41c" /><path d="M10 24h24v4l-12 4H10z" fill="#0d9425" />
      <path d="M15 15l4-1 11 11c2 2-1 5-3 3L16 18z" fill="#f0f0ee" />
    </>
  )],
  ['Corel Capture', (
    <>
      <rect x="10" y="10" width="24" height="24" rx="5" fill="#c8102e" /><path d="M10 20h24v6H10z" fill="#7d0a1c" />
      <circle cx="22" cy="22" r="8" fill="#c9c9c9" /><circle cx="22" cy="22" r="6.500" fill="#3a3538" /><circle cx="22" cy="22" r="3.500" fill="#77757c" /><circle cx="29.500" cy="14" r="1.500" fill="#fff" />
    </>
  )],
  ['3ds Max', (
    <>
      <rect x="3" y="2" width="37" height="40" rx="3" fill="#f8efe9" stroke="#e6dad2" />
      <g transform="translate(10 10)"><MaxLogo /></g>
      <rect x="15" y="38" width="13" height="3" rx="1.500" fill="#1571c4" />
    </>
  )],
  ['Snipping Tool', (
    <>
      <rect x="11" y="18" width="19" height="19" rx="2" fill="#f6f1f0" />
      <path d="M24 21h-9v10h4" fill="none" stroke="#cc4a26" strokeWidth="3" strokeDasharray="2.500 1" />
      <path d="M17 39h12" stroke="#8f8580" strokeWidth="3" />
      <path d="M25 21v11M20 31h11" fill="none" stroke="#8c8c90" strokeWidth="3" />
      <circle cx="31" cy="31" r="2.500" fill="none" stroke="#1d86cf" strokeWidth="2" /><circle cx="24" cy="39" r="2.500" fill="none" stroke="#1d86cf" strokeWidth="2" />
      <path d="M29 33l-3 4" stroke="#1d86cf" strokeWidth="2" />
    </>
  )],
];

const Caret = () => (
  <svg width="6" height="5" viewBox="0 0 6 5"><path d="M0 0h6L3 5z" fill="#c8c8c8" /></svg>
);

const RollHead = ({ title }: { title: string }) => (
  <RolloutHead>
    <Caret />
    <span>{title}</span>
    <svg width="6" height="6" viewBox="0 0 6 6"><path d="M0 .5h6M0 2.500h6M0 4.500h6" stroke="#a0a0a0" strokeDasharray="1 1.500" /></svg>
  </RolloutHead>
);

export default function App() {
  return (
    <Shell>
      <GlobalStyle />
      <TitleBar>
        <svg width="14" height="16" viewBox="0 0 24 24" preserveAspectRatio="none" aria-hidden="true"><MaxLogo /></svg>
        <h1>morning at half past five am sky.max - Autodesk 3ds Max 2022</h1>
        <button aria-label="Minimize"><svg width="10" height="10"><path d="M0 5.500h10" stroke="#111" /></svg></button>
        <button aria-label="Restore"><svg width="10" height="10" fill="none" stroke="#111"><rect x=".5" y="2.500" width="7" height="7" rx="1" /><path d="M3 .5h4.500a2 2 0 0 1 2 2V7" /></svg></button>
        <button aria-label="Close"><svg width="10" height="10"><path d="M0 0l10 10M10 0L0 10" stroke="#111" /></svg></button>
      </TitleBar>

      <MenuBar>
        {MENUS.map((m) => <button key={m}>{m}</button>)}
        <Workspaces>Workspaces: <Select label="Workspaces" value="Default" w={137} h={20} /></Workspaces>
      </MenuBar>

      <MainBar>
        <Grip $h={26} $w={9} />
        <Tools items={[{ i: 'undo', l: 'Undo' }, { i: 'redo', l: 'Redo' }]} />
        <Divider />
        <Tools items={[{ i: 'link', l: 'Link' }, { i: 'unlink', l: 'Unlink' }, { i: 'bind', l: 'Bind to Space Warp', dim: true }]} />
        <Divider />
        <Select label="Selection filter" value="All" w={68} h={20} x={1} raised />
        <Tools items={[{ i: 'select', l: 'Select Object', on: true }, { i: 'selectName', l: 'Select by Name' }, { i: 'rectRegion', l: 'Selection Region', fly: true }, { i: 'windowCross', l: 'Window/Crossing' }]} />
        <Divider />
        <Tools items={[{ i: 'move', l: 'Move' }, { i: 'rotate', l: 'Rotate' }, { i: 'scale', l: 'Scale', fly: true }, { i: 'place', l: 'Place', fly: true }]} />
        <Select label="Reference coordinate system" value="View" w={68} h={20} x={1} raised />
        <Tools items={[{ i: 'pivot', l: 'Pivot Center', fly: true }]} />
        <Divider />
        <Tools items={[{ i: 'manipulate', l: 'Manipulate' }, { i: 'keyboard', l: 'Keyboard Override', on: true }]} />
        <Divider />
        <Tools items={[{ i: 'snap3', l: 'Snaps', fly: true }, { i: 'snapAngle', l: 'Angle Snap' }, { i: 'snapPercent', l: 'Percent Snap' }, { i: 'snapSpinner', l: 'Spinner Snap' }]} />
        <Divider />
        <Tools items={[{ i: 'namedSel', l: 'Edit Named Selections' }]} />
        <Select label="Named selection sets" value="Create Selection Se" w={118} h={20} x={1} raised />
        <Divider />
        <Tools items={[{ i: 'mirror', l: 'Mirror' }, { i: 'align', l: 'Align', fly: true }]} />
        <Divider />
        <Tools items={[{ i: 'layers', l: 'Scene Explorer' }, { i: 'stack', l: 'Layer Explorer' }]} />
        <Divider />
        <Tools items={[{ i: 'ribbon', l: 'Toggle Ribbon', on: true }, { i: 'curve', l: 'Curve Editor' }, { i: 'schematic', l: 'Schematic View' }]} />
        <Divider />
        <Tools items={[{ i: 'material', l: 'Material Editor', fly: true }]} />
        <Divider />
        <Tools items={[{ i: 'renderSetup', l: 'Render Setup' }, { i: 'renderFrame', l: 'Rendered Frame Window' }, { i: 'render', l: 'Render', fly: true }]} />
        <Grip $h={26} />
        <Select label="Project folder" value="C:\Users\A...s Max 2022" w={148} h={29} />
        <Tools items={[{ i: 'projGear', l: 'Project settings', w: 30 }, { i: 'projFolder', l: 'Open project', w: 30 }, { i: 'projTree', l: 'Project tree', w: 30 }, { i: 'projNodes', l: 'Project nodes', w: 30 }]} />
        <Grip $h={26} />
        <Tools items={[{ i: 'brushGear', l: 'Paint settings' }, { i: 'brushPlus', l: 'Add brush' }]} />
        <Brush aria-label="Brush 1" $r={3} $soft />
        <Brush aria-label="Brush 2" $r={6} $soft />
        <Brush aria-label="Brush 3" $r={11} $soft />
        <Brush aria-label="Brush 4" $r={11} />
        <Brush aria-label="Brush 5" $r={11} />
        <Grip $h={26} />
        <RvButton aria-label="RV"><Icon name="rv" /><span>RV</span></RvButton>
      </MainBar>

      <Ribbon>
        <Grip $h={36} $w={9} />
        <RibbonBody>
          <RibbonTabs>
            <RibbonTab $on>Modeling</RibbonTab>
            <RibbonTab>Freeform</RibbonTab>
            <RibbonTab>Selection</RibbonTab>
            <RibbonTab>Object Paint</RibbonTab>
            <RibbonTab>Populate</RibbonTab>
            <RibbonMenu aria-label="Ribbon display">
              <svg width="13" height="8" viewBox="0 0 13 8"><rect width="13" height="8" rx="2" fill="#ececec" /><path d="M4 2h5L6.500 6z" fill="#333" /></svg>
              <svg width="4" height="4" viewBox="0 0 4 4"><path d="M0 0h4L2 4z" fill="#c8c8c8" /></svg>
            </RibbonMenu>
          </RibbonTabs>
          <RibbonPanel><button>Polygon Modeling</button></RibbonPanel>
        </RibbonBody>
      </Ribbon>

      <Work>
        <Dock>
          <HGrip />
          <DockBody>
            <DockArrow aria-label="Expand"><svg width="6" height="9" viewBox="0 0 6 9"><path d="M0 0l6 4.500L0 9z" fill="#eee" /></svg></DockArrow>
            <LayoutTab aria-label="Viewport layout">
              <svg width="30" height="28" viewBox="0 0 30 28"><rect width="30" height="28" fill="#263a58" /><path d="M1 1h13v12H1zM16 1h13v12H16zM1 15h13v12H1zM16 15h13v12H16z" fill="#5a6f8f" /></svg>
            </LayoutTab>
          </DockBody>
        </Dock>

        <Views>
          <View>
            <Scene>
              <Grid x={405} y={196} step={20.26} color="#606060" />
              <path d="M405.500 0V800" stroke={LINE} shapeRendering="crispEdges" />
              <path d="M405.500 2v11" stroke="#111" strokeWidth="2" />
              <path d="M401 8h9v8h-9z" fill="none" stroke="#f0e02c" strokeWidth="1.500" />
              <Axis x={24} y={368} up={['y', GREEN]} side={['x', RED]} origin={['z', BLUE]} />
            </Scene>
            <ViewLabel parts={['+', 'Top', 'Standard', 'Wireframe']} />
            <Compass />
          </View>
          <View>
            <Scene>
              <Grid x={405} y={196} step={20.26} color="#606060" />
              <path d="M405.500 0V800" stroke={LINE} shapeRendering="crispEdges" />
              <path d="M401 299h9v8h-9z" fill="#363636" stroke="#5470c0" />
              <path d="M401 288h9v8h-9z" fill="#363636" stroke="#f0e02c" strokeWidth="1.500" />
              <Axis x={24} y={368} up={['z', BLUE]} side={['x', RED]} origin={['y', GREEN]} />
            </Scene>
            <ViewLabel parts={['+', 'Front', 'Standard', 'Wireframe']} />
            <SideCube label="FRONT" />
          </View>
          <View>
            <Scene>
              <Grid x={492} y={172} step={5.065} color="#6b6b6b" />
              <path d="M659.500 71.500L446 197M446 197L219 251" stroke={LINE} strokeWidth="1.200" />
              <circle cx="660" cy="71.500" r="3.800" fill="none" stroke="#f0e02c" strokeWidth="1.300" />
              <path d="M658 73l2-3 2 3z" fill="none" stroke="#f0e02c" strokeWidth=".8" />
              <path d="M438 195h8v8h-8z" fill="none" stroke="#5470c0" />
              <path d="M443 193h7v8h-7z" fill="none" stroke="#f0e02c" strokeWidth="1.500" />
              <path d="M209 246l10-2 3 12-9 4zM221 247l7-3 1 9-7 2zM213 247l3 11" fill="none" stroke="#5470c0" />
              <Axis x={25} y={369} up={['z', BLUE]} side={['y', GREEN]} dir={-1} origin={['x', RED]} bold />
            </Scene>
            <ViewLabel parts={['+', 'Left', 'Standard', 'Wireframe']} />
            <SideCube label="LEFT" />
          </View>
          <View $light>
            <Scene>
              <path d="M243 199l34-7 90 1-27 8H262z" fill="#5d5d5d" />
              <path d="M268 196h34M330 197h24" stroke="#222" strokeDasharray="4 2" />
              <path d="M98 61L371 232M371 232L694 319" stroke={LINE} strokeWidth="1.100" />
              <circle cx="98" cy="61" r="3.800" fill="none" stroke="#efe03a" strokeWidth="1.300" />
              <circle cx="98" cy="61" r="1" fill="#efe03a" />
              <path d="M362 225h11v10h-11zM362 225l4-2h8v9" fill="none" stroke="#f0dc2c" strokeWidth="1.400" />
              <path d="M367 229h10v10h-10zM374 229v10" fill="none" stroke="#4a64b8" strokeWidth="1.200" />
              <path d="M686 310l5 3-1 9-5-2zM694 310l11 3-3 14-9-3zM692 312l8 3-1 10M688 320l12 3" fill="none" stroke="#4a64b8" strokeWidth="1.100" />
              <Axis x={24} y={368} up={['z', '#0c0c90']} side={['y', '#0c800c']} origin={['x', '#b01010']} bold />
            </Scene>
            <ViewLabel parts={['+', 'Perspective', 'Standard', 'Default Shading']} />
            <SideCube label="RIGHT" light />
          </View>
        </Views>

        <Command>
          <HGrip />
          <CmdTabs>
            <CmdTab $on aria-label="Create"><Icon name="create" size={20} /></CmdTab>
            {['modify', 'hierarchy', 'motion', 'display', 'utilities'].map((n) => (
              <CmdTab key={n} aria-label={n}><Icon name={n} size={18} /></CmdTab>
            ))}
          </CmdTabs>
          <CmdCats>
            {['geometry', 'shapes', 'lights', 'cameras', 'helpers', 'warps', 'systems'].map((n) => (
              <CmdCat key={n} aria-label={n} $on={n === 'geometry'}><Icon name={n} size={17} /></CmdCat>
            ))}
          </CmdCats>
          <CategoryRow><Select label="Category" value="Standard Primitives" h={21} /></CategoryRow>
          <CmdBody>
            <Rollouts>
              <Rollout>
                <RollHead title="Object Type" />
                <AutoGrid><input type="checkbox" disabled />AutoGrid</AutoGrid>
                <Prims>{PRIMS.map((p) => <Flat key={p}>{p}</Flat>)}</Prims>
              </Rollout>
              <Rollout>
                <RollHead title="Name and Color" />
                <NameRow><input aria-label="Object name" /><button aria-label="Object color" /></NameRow>
              </Rollout>
            </Rollouts>
            <ScrollTrack />
          </CmdBody>
        </Command>

        <Float $x={599} $y={68}>
          <Grip $h={24} $w={8} />
          <Tools items={[{ i: 'trees', l: 'Forest' }, { i: 'frame', l: 'Frame' }, { i: 'help', l: 'Help' }]} />
        </Float>
        <Float $x={201} $y={81}>
          <Grip $h={26} $w={8} />
          <Tools items={[{ i: 'teapot', l: 'V-Ray render', fly: true }, { i: 'cloud', l: 'Chaos Cloud' }, { i: 'vfb', l: 'Frame buffer' }]} />
          <Divider $w={8} $h={16} />
          <Tools items={[{ i: 'lightLister', l: 'Light lister' }, { i: 'camLister', l: 'Camera lister' }]} />
          <Divider $w={8} $h={16} />
          <Tools items={[{ i: 'camera', l: 'Physical camera' }]} />
          <Divider $w={8} $h={16} />
          <Tools items={['planeLight', 'dome', 'sphereLight', 'meshLight', 'discLight', 'ies', 'sun', 'ambient'].map((i) => ({ i, l: i }))} />
          <Divider $w={8} $h={16} />
          <Tools items={['proxy', 'clipper', 'planeObj', 'instancer', 'fur', 'fire'].map((i) => ({ i, l: i }))} />
          <Divider $w={8} $h={16} />
          <Tools items={[{ i: 'ball', l: 'Material', fly: true }, { i: 'balls', l: 'Material library' }, { i: 'palette', l: 'Palette' }, { i: 'converter', l: 'Bake' }]} />
          <Divider $w={8} $h={16} />
          <Tools items={[{ i: 'sceneConv', l: 'Scene converter' }, { i: 'vray', l: 'V-Ray' }]} />
        </Float>
      </Work>

      <Timeline>
        <Grip $h={45} $w={9} />
        <TimeBody>
          <SliderRow>
            <SliderBtn $w={14} aria-label="Previous frame">&lt;</SliderBtn>
            <SliderBtn $w={123}>0 / 100</SliderBtn>
            <SliderBtn $w={14} aria-label="Next frame">&gt;</SliderBtn>
          </SliderRow>
          <TrackRow>
            <TrackBtn aria-label="Mini curve editor"><Icon name="trackIcon" size={16} /></TrackBtn>
            <Track>
              {Array.from({ length: 101 }, (_, i) => (
                <Tick key={i} $major={i % 5 === 0} $now={i === 0}>{i % 5 === 0 && <span>{i}</span>}</Tick>
              ))}
            </Track>
          </TrackRow>
        </TimeBody>
      </Timeline>

      <Status>
        <Scripts>
          <input aria-label="Macro recorder" />
          <input aria-label="MAXScript listener" defaultValue="MAXScript Mini" />
        </Scripts>
        <Messages>
          <p>None Selected</p>
          <p>Click or click-and-drag to select objects</p>
        </Messages>
        <StatusStack $gap={5}>
          <StatusRow>
            <IconBtn $w={27} aria-label="Isolate"><Icon name="isolate" size={17} /></IconBtn>
            <IconBtn $w={27} aria-label="Lock selection"><Icon name="lock" size={16} /></IconBtn>
            <IconBtn $w={27} aria-label="Absolute mode"><Icon name="absolute" size={15} /></IconBtn>
            {['X', 'Y', 'Z'].map((a) => <Coord key={a}><span>{a}:</span><input aria-label={a} /></Coord>)}
            <StatusText $w={88}>Grid = 25.4cm</StatusText>
          </StatusRow>
          <StatusRow>
            <Divider $w={14} />
            <IconBtn $w={20} $bg="#646464" aria-label="Safety"><Icon name="shield" size={14} /></IconBtn>
            <StatusText $w={52}>Enabled:</StatusText>
            <Dot />
            <IconBtn $w={20} $bg="#646464" aria-label="1"><Icon name="one" size={15} /><b>1</b></IconBtn>
            <Divider $w={12} />
            <IconBtn $w={21} $bg="#5f88bf" aria-label="Time tag"><Icon name="timeTag" size={15} /></IconBtn>
            <StatusText $w={88}>Add Time Tag</StatusText>
          </StatusRow>
        </StatusStack>
        <Playback>
          <IconBtn $w={25} aria-label="Go to start"><Icon name="toStart" size={16} /></IconBtn>
          <VLine />
          <PlayGroup>
            <IconBtn $w={22} aria-label="Previous frame"><Icon name="prev" size={16} /></IconBtn>
            <IconBtn $w={22} $fly aria-label="Play"><Icon name="play" size={14} /></IconBtn>
            <IconBtn $w={22} aria-label="Next frame"><Icon name="next" size={16} /></IconBtn>
          </PlayGroup>
          <VLine />
          <IconBtn $w={25} aria-label="Go to end"><Icon name="toEnd" size={16} /></IconBtn>
          <IconBtn $w={25} aria-label="Key mode"><Icon name="keyMode" size={13} /></IconBtn>
          <VLine />
          <Spinner>
            <input aria-label="Current frame" defaultValue="0" />
            <svg width="6" height="10" viewBox="0 0 6 10"><path d="M0 4l3-4 3 4zM0 6h6l-3 4z" fill="#d6d6d6" /></svg>
          </Spinner>
          <VLine />
          <IconBtn $w={25} aria-label="Time configuration"><Icon name="timeCfg" size={15} /></IconBtn>
        </Playback>
        <KeyGrid>
          <BigKey aria-label="Set keys">
            <svg width="30" height="30" viewBox="0 0 30 30">
              <path d="M11 2h6v9h9v6h-9v9h-6v-9H2v-6h9z" fill="#dcdcdc" />
              <path d="M20 22l7-7M24 18l2 2M26 16l2 2" stroke={T} strokeWidth="2.400" fill="none" />
              <circle cx="18" cy="24" r="3" fill="none" stroke={T} strokeWidth="2.400" />
            </svg>
          </BigKey>
          <Flat>Auto Key</Flat>
          <Select label="Key set" value="Selected" h={20} />
          <Flat>Set Key</Flat>
          <KeyRow>
            <IconBtn $w={22} $fly aria-label="Tangents"><Icon name="tangents" size={16} /></IconBtn>
            <Flat>Key Filters...</Flat>
          </KeyRow>
        </KeyGrid>
        <NavGrid>
          {[['zoom', 0], ['zoomAll', 0], ['extents', 1], ['extentsAll', 1], ['fov', 1], ['pan', 1], ['orbit', 1], ['maximize', 0]].map(([n, f]) => (
            <IconBtn key={n as string} $w={23} $fly={!!f} aria-label={n as string}><Icon name={n as string} size={16} /></IconBtn>
          ))}
        </NavGrid>
      </Status>

      <Taskbar>
        <Weather>
          <svg width="24" height="26" viewBox="0 0 24 26">
            <path d="M1 13C2 8 6 6 10 6s9 3 10 7c-2-1-4-1-5 0-2-1-5-1-7 0-2-1-5-1-7 0z" fill="#3b9be8" />
            <path d="M10 12v10a2 2 0 0 1-4 0" fill="none" stroke="#777" strokeWidth="2" />
            <path d="M10 3l-1 2M14 1l-1 2M18 2l-1 2M21 4l-1 2M17 6l-1 2M22 9l-1 2" stroke="#4b9fe0" strokeWidth="1.500" />
          </svg>
          <span>Rain showers<small>Friday</small></span>
        </Weather>
        <Apps>
          <AppBtn aria-label="Start">
            <svg width="24" height="24" viewBox="0 0 24 24">
              <defs><linearGradient id="win" x1="0" y1="0" x2="1" y2="1"><stop offset="0" stopColor="#35c0f5" /><stop offset="1" stopColor="#0a6fd0" /></linearGradient></defs>
              <path d="M0 0h11.500v11.500H0zM12.500 0H24v11.500H12.500zM0 12.500h11.500V24H0zM12.500 12.500H24V24H12.500z" fill="url(#win)" />
            </svg>
          </AppBtn>
          <Search>
            <svg width="16" height="16" viewBox="0 0 16 16" fill="none" stroke="#2a2626" strokeWidth="1.700"><circle cx="6.500" cy="6.500" r="5.300" /><path d="M10.500 10.500l4.500 4.500" /></svg>
            <input placeholder="Search" aria-label="Search" />
            <svg width="38" height="26" viewBox="0 0 38 26">
              <path d="M1 22c4-4 8-3 11-1h13c4-3 8-2 12 1v2H1z" fill="#5e9a35" />
              <path d="M9 16h16l3 8H6z" fill="#a39c95" />
              <path d="M12 3h12l-2 5h-8zM11 9h14l-1 4H12zM10 14h16l-1 4H11z" fill="#e9edf0" />
              <path d="M14 1h8l2 3H12zM12 7h12l2 3H10zM10 12h16l2 3H8z" fill="#3b82b4" />
              <path d="M14 5h8v2h-8zM13 10h10v2H13z" fill="#e9edf0" />
            </svg>
          </Search>
          {appIcons.map(([n, body]) => (
            <AppBtn key={n} aria-label={n}><svg width="44" height="44" viewBox="0 0 44 44">{body}</svg></AppBtn>
          ))}
        </Apps>
        <Tray>
          <svg width="12" height="8" viewBox="0 0 12 8" fill="none" stroke="#222" strokeWidth="1.400"><path d="M1 6.500l5-5 5 5" /></svg>
          <span>ENG</span>
          <svg width="40" height="16" viewBox="0 0 40 16" fill="none" stroke="#222" strokeWidth="1.300">
            <path d="M1 6c4-5 11-5 15 0M3.500 8.500c3-3.500 7-3.500 10 0M6 11c1.500-1.500 3.500-1.500 5 0" /><circle cx="8.500" cy="13" r="1" fill="#222" />
            <path d="M25 6h3l4-4v12l-4-4h-3zM34 5.500c1.300 1.500 1.300 3.500 0 5" /><path d="M36.500 3c2.500 3 2.500 7 0 10" stroke="#b5aaa5" />
          </svg>
          <Clock>
            <time>12:00<br />18/09/2024</time>
            <svg width="14" height="16" viewBox="0 0 14 16" fill="none" stroke="#222" strokeWidth="1.200"><path d="M1 12.500c1.500-2 1.500-3 1.500-6a4.500 4.500 0 0 1 9 0c0 3 0 4 1.500 6zM5 13c0 2.500 4 2.500 4 0" /></svg>
          </Clock>
        </Tray>
      </Taskbar>
    </Shell>
  );
}
